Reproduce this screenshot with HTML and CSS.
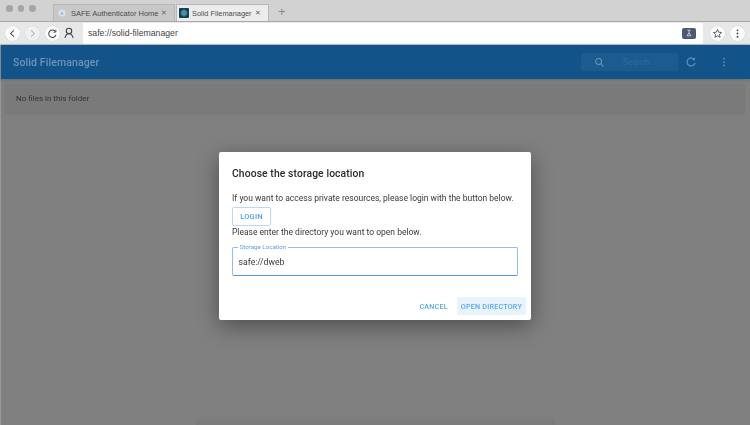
FILE: index.html
```html
<!DOCTYPE html>
<html lang="en">
<head>
<meta charset="utf-8">
<title>Solid Filemanager</title>
<link rel="stylesheet" href="styles.css">
</head>
<body>
<div class="browser">
  <div class="tabbar">
    <div class="lights"><i></i><i></i><i></i></div>
    <div class="tab">
      <svg class="fav" viewBox="0 0 10 10"><circle cx="5" cy="5" r="4.5" fill="#d3e2ee"/><path d="M3 6.8 5 3.2 7 6.8Z" fill="#8db6d6"/></svg>
      <span class="tab-title">SAFE Authenticator Home</span><span class="tab-x">✕</span>
    </div>
    <div class="tab active">
      <svg class="fav big" viewBox="0 0 11 11"><rect width="11" height="11" rx="1" fill="#123f55"/><circle cx="5.5" cy="5.5" r="3" fill="#5ea9b8"/><path d="M1 5.5h9M5.5 1v9M2.5 2.5l6 6M8.5 2.5l-6 6" stroke="#3c8596" stroke-width=".8"/></svg>
      <span class="tab-title">Solid Filemanager</span><span class="tab-x">✕</span>
    </div>
    <span class="plus">+</span>
  </div>
  <div class="toolbar">
    <div class="navs">
      <span class="circle"><svg viewBox="0 0 12 12"><path d="M7.5 2.5 4 6l3.5 3.5" class="ico"/></svg></span>
      <span class="circle faded"><svg viewBox="0 0 12 12"><path d="M4.5 2.5 8 6 4.500 9.500" class="ico"/></svg></span>
      <span class="circle"><svg viewBox="0 0 12 12"><path d="M9.300 4.200A4 4 0 1 0 9.700 7.500" class="ico"/><path d="M9.700 1.800v2.700H7" class="ico thin"/></svg></span>
      <span class="person"><svg viewBox="0 0 12 12"><circle cx="6" cy="4" r="2.700" class="ico"/><path d="M2 11c.4-2.700 1.800-4.300 4-4.300S9.600 8.300 10 11" class="ico"/></svg></span>
    </div>
    <div class="address">
      <span class="url">safe://solid-filemanager</span>
      <span class="badge"><svg viewBox="0 0 10 10"><path d="M3 1.500h4M5 1.500v3.200L2.500 8.500h5L5 4.700" fill="none" stroke="#dfe4ea" stroke-width="1"/></svg></span>
    </div>
    <div class="actions">
      <span class="circle"><svg viewBox="0 0 12 12"><path d="m6 1.700 1.300 2.900 3.100.3-2.300 2.100.7 3.100L6 8.500l-2.800 1.600.7-3.100-2.300-2.100 3.100-.3Z" class="ico thin"/></svg></span>
      <span class="circle"><svg viewBox="0 0 12 12"><circle cx="6" cy="2.500" r="1" fill="#444"/><circle cx="6" cy="6" r="1" fill="#444"/><circle cx="6" cy="9.500" r="1" fill="#444"/></svg></span>
    </div>
  </div>
</div>
<div class="app">
  <header class="appbar">
    <span class="brand">Solid Filemanager</span>
    <div class="search">
      <svg viewBox="0 0 14 14"><circle cx="5.800" cy="5.800" r="3.800" class="bar-ico"/><path d="m8.600 8.600 3.600 3.600" class="bar-ico"/></svg>
      <span>Search...</span>
    </div>
    <svg class="refresh" viewBox="0 0 14 14"><path d="M11 4.300A4.700 4.700 0 1 0 11.700 8" class="bar-ico"/><path d="M11.500 1.800v3.200H8.300Z" fill="#6e93b4"/></svg>
    <svg class="more" viewBox="0 0 4 14"><circle cx="2" cy="3" r="1" fill="#6e93b4"/><circle cx="2" cy="7" r="1" fill="#6e93b4"/><circle cx="2" cy="11" r="1" fill="#6e93b4"/></svg>
  </header>
  <div class="content">
    <div class="paper">No files in this folder</div>
  </div>
  <div class="scrim">
    <div class="dialog">
      <h2 class="dialog-title">Choose the storage location</h2>
      <p class="dialog-text">If you want to access private resources, please login with the button below.</p>
      <button class="login">LOGIN</button>
      <p class="dialog-text second">Please enter the directory you want to open below.</p>
      <fieldset class="field">
        <legend>Storage Location</legend>
        <span class="field-value">safe://dweb</span>
      </fieldset>
      <div class="dialog-actions">
        <button class="action">CANCEL</button>
        <button class="action primary">OPEN DIRECTORY</button>
      </div>
    </div>
  </div>
</div>
</body>
</html>
```
FILE: styles.css
```css
* { box-sizing: border-box; }
html, body { margin: 0; height: 100%; }
body {
  width: 750px; height: 425px; overflow: hidden;
  display: flex; flex-direction: column;
  background: #808080;
  font-family: Roboto, "Liberation Sans", sans-serif;
  filter: blur(.35px);
}
svg { display: block; }
.ico { fill: none; stroke: #444; stroke-width: 1.1; }
.ico.thin { stroke-width: .9; }
.browser { flex: none; height: 45px; display: flex; flex-direction: column; }
.tabbar {
  height: 21px; flex: none; background: #d2d2d3; display: flex; align-items: flex-end;
  font-family: "Liberation Sans", sans-serif;
}
.lights { width: 53px; height: 100%; padding: 5px 0 0 6px; display: flex; gap: 5px; }
.lights i { width: 6.500px; height: 6.500px; border-radius: 50%; background: #a5a5a6; }
.tab {
  width: 122px; height: 17px; display: flex; align-items: center;
  padding: 0 0 0 4px; background: #c8c8c9; border: 1px solid #b8b8b9; border-bottom: 0;
  font-size: 7.500px; color: #4c4c4c; white-space: nowrap;
}
.tab.active { width: 93px; background: #ececec; margin-left: 1px; padding-left: 2px; font-size: 7.400px; }
.fav { width: 8px; height: 8px; margin-right: 5px; flex: none; }
.fav.big { width: 10px; height: 10px; margin-right: 3px; }
.tab-title { flex: 1; }
.tab-x { font-size: 7px; margin-right: 7px; color: #666; }
.plus { font-size: 13px; color: #8a8a8a; margin: 0 0 1px 9px; line-height: 16px; }
.toolbar {
  flex: 1; background: #e8e8e8; display: flex; align-items: center;
  border-top: 1px solid #a9a9aa; border-bottom: 1px solid #c9c9c9;
}
.navs { width: 83px; padding-left: 4.500px; display: flex; align-items: center; gap: 5px; flex: none; }
.circle {
  width: 15px; height: 15px; border-radius: 50%; background: #fbfbfb;
  box-shadow: 0 0 0 .5px #d8d8d8;
  display: flex; align-items: center; justify-content: center; flex: none;
}
.circle svg { width: 11px; height: 11px; }
.circle.faded { background: #f0f0f0; }
.circle.faded svg { opacity: .35; }
.person { width: 12px; height: 12px; margin-left: -2px; }
.address {
  width: 620px; height: 21px; background: #fff; display: flex; align-items: center;
  justify-content: space-between; padding: 0 7px 0 5px;
}
.url { font-family: "Liberation Sans", sans-serif; font-size: 8.700px; color: #444; }
.badge {
  width: 14px; height: 11px; border-radius: 2px; background: #4a5a72;
  display: flex; align-items: center; justify-content: center;
}
.badge svg { width: 8px; height: 8px; }
.actions { display: flex; gap: 5px; padding-left: 7px; }
.app { position: relative; flex: 1; display: flex; flex-direction: column; border-left: 1px solid #9a9a9a; }
.app::after {
  content: ""; position: absolute; left: 195px; right: 195px; bottom: 0; height: 10px;
  background: linear-gradient(transparent, rgba(0,0,0,.04));
}
.appbar {
  height: 34px; flex: none; background: #12548a; display: flex; align-items: center;
  padding-left: 12px; color: #6e93b4; box-shadow: 0 1px 3px #6a6a6a;
}
.brand { font-size: 10.500px; font-weight: 500; flex: 1; letter-spacing: .1px; }
.search {
  width: 97px; height: 18px; background: #1b5b8f; border-radius: 2px;
  display: flex; align-items: center; padding-left: 13px; gap: 18px;
  font-size: 8.500px; color: #2f6a9b; margin-right: 7px;
}
.search svg { width: 11px; height: 11px; }
.bar-ico { fill: none; stroke: #6e93b4; stroke-width: 1.300; }
.refresh { width: 12px; height: 12px; margin-right: 25px; }
.more { width: 4px; height: 12px; margin-right: 24px; }
.content { flex: 1; padding: 5px 5px 0 4px; }
.paper {
  height: 29px; background: #7a7a7a; border-radius: 2px; padding-left: 11px;
  display: flex; align-items: center; font-size: 8px; color: #333;
  box-shadow: 0 1px 2px #757575;
}
.scrim {
  position: absolute; inset: 0 0 0 -1px; display: flex; align-items: center; justify-content: center;
  pointer-events: none;
}
.dialog {
  width: 312px; height: 168px; margin-top: 2px; background: #fff; border-radius: 2px;
  padding: 15px 13px 0; display: flex; flex-direction: column;
  box-shadow: 0 6px 22px rgba(0,0,0,.4);
}
.dialog-title { margin: 0; font-size: 10.350px; font-weight: 500; color: #2a2a2a; line-height: 14px; letter-spacing: .1px; }
.dialog-text { margin: 11px 0 0; font-size: 8.500px; line-height: 12px; color: #3a3a3a; white-space: nowrap; }
.dialog-text.second { margin-top: 0; }
.login {
  width: 39px; height: 19px; margin-top: 3px; border: 1px solid #b9daf5; border-radius: 2px;
  background: #fff; color: #4da2e6; font: 500 7.500px Roboto, sans-serif; letter-spacing: .2px; padding: 0;
}
.field {
  margin: 5.500px 0 0; padding: 0 0 0 5.500px; height: 32.500px; border: 1.500px solid #8fc0ec;
  border-bottom-color: #4f97da; border-radius: 2px;
  display: flex; flex-direction: column; min-width: 0;
}
.field legend { font-size: 6.200px; color: #5ba3e2; padding: 0 2px; margin-left: -1px; line-height: 7px; }
.field-value { font-size: 8.700px; color: #3a3a3a; line-height: 12px; margin-top: 5px; }
.dialog-actions { display: flex; justify-content: flex-end; align-items: center; gap: 5px; margin: 21px -8px 0 0; }
.action {
  border: 0; background: none; color: #5ba9e8; font: 500 7.200px Roboto, sans-serif;
  letter-spacing: .2px; height: 18px; padding: 0 4px;
}
.primary { background: #e9f3fc; border-radius: 2px; }
```
